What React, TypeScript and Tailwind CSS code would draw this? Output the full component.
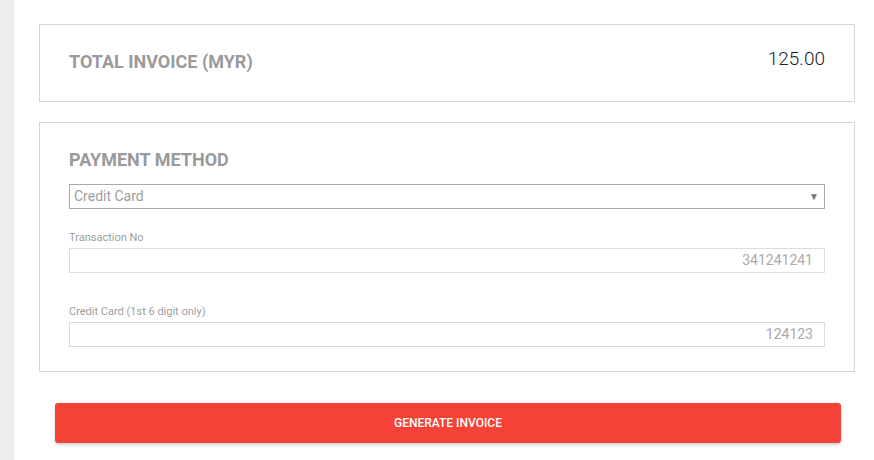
import React from 'react';

const Field: React.FC<{ label: string; value: string }> = ({ label, value }) => (
  <div>
    <div className="text-[11px] leading-4 text-[#9e9e9e]">{label}</div>
    <div className="mt-[2px] h-[25px] border border-[#dcdcdc] flex items-center justify-end pr-[11px] text-[14px] text-[#aaaaaa]">
      {value}
    </div>
  </div>
);

export default function App() {
  return (
    <div className="min-h-screen w-[874px] h-[460px] overflow-hidden bg-white flex" style={{ fontFamily: 'Roboto, "Liberation Sans", sans-serif' }}>
      <div className="w-[14px] shrink-0 bg-[#eeeeee] border-r border-[#e6e6e6]" />
      <div className="flex-1 pl-[25px] pr-[19px] pt-[24px]">
        {/* total */}
        <div className="h-[78px] border border-[#d6d6d6] px-[29px] flex items-center justify-between">
          <h2 className="text-[18px] font-bold text-[#9a9a9a] -mt-[3px]">TOTAL INVOICE (MYR)</h2>
          <span className="text-[19px] font-light text-[#222] -mt-[7px]">125.00</span>
        </div>

        {/* payment method */}
        <div className="mt-[20px] border border-[#d6d6d6] px-[29px] pt-[25px] pb-[24px]">
          <h2 className="text-[18px] leading-6 font-bold text-[#9a9a9a]">PAYMENT METHOD</h2>
          <div className="mt-[12px] h-[25px] border border-[#a9a9a9] flex items-center justify-between pl-[4px] pr-[5px] text-[14px] text-[#9e9e9e]">
            <span>Credit Card</span>
            <span className="text-[10px] text-[#777]">▼</span>
          </div>
          <div className="mt-[21px]">
            <Field label="Transaction No" value="341241241" />
          </div>
          <div className="mt-[31px]">
            <Field label="Credit Card (1st 6 digit only)" value="124123" />
          </div>
        </div>

        <div className="mt-[31px] ml-[16px] mr-[14px]">
          <button className="w-full h-[40px] rounded-[3px] bg-[#f44336] text-white text-[12px] font-medium shadow-[0_2px_3px_rgba(0,0,0,0.18)]">
            GENERATE INVOICE
          </button>
        </div>
      </div>
    </div>
  );
}
